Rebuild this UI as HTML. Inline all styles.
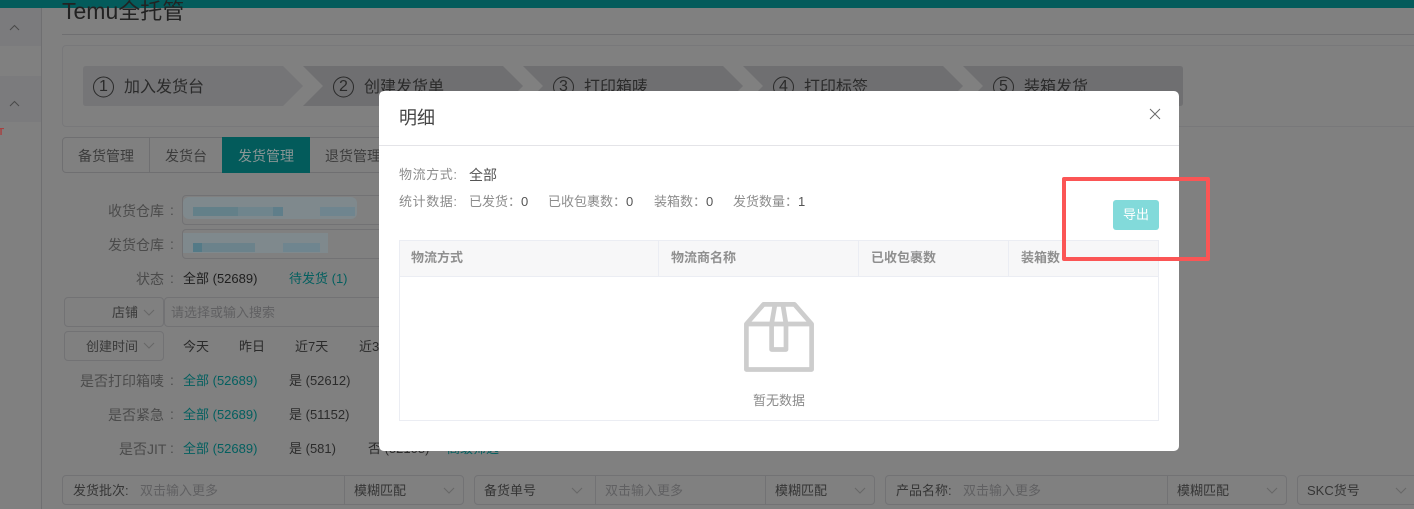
<!DOCTYPE html>
<html lang="zh">
<head>
<meta charset="utf-8">
<title>明细</title>
<style>
html,body{margin:0;padding:0}
body{width:1414px;height:509px;overflow:hidden;position:relative;background:#808080;font-family:"Liberation Sans","Noto Sans CJK SC",sans-serif;font-size:13px;color:#333}
.a{position:absolute;white-space:nowrap}
.t{position:absolute;white-space:nowrap;line-height:20px;height:20px}
.lb{color:#4b4b4b;font-size:14px}
.dk{color:#2b2b2b}
.gr{color:#035f5f}
.box{position:absolute;box-sizing:border-box;border:1px solid #727274;border-radius:4px}
svg{position:absolute;overflow:visible}
.m{color:#8c8c8c}
.d{color:#555}
.th{position:absolute;top:240px;height:36px;line-height:35px;font-weight:bold;color:#8f8f8f;font-size:13px;white-space:nowrap}
.step{font-size:16px}
.num{font-size:16px;width:20px;text-align:center}
.tb{font-size:14px;color:#3c3c3c}
.c{letter-spacing:.6px}
</style>
</head>
<body>
<div class="a" style="left:0;top:0;width:1414px;height:8px;background:#035b5b"></div>

<!-- sidebar -->
<div class="a" style="left:0;top:8px;width:41px;height:38px;background:#7b7b7d"></div>
<div class="a" style="left:0;top:76px;width:41px;height:46px;background:#7b7b7d"></div>
<div class="a" style="left:41px;top:8px;width:1px;height:501px;background:#6f6f71"></div>
<svg style="left:0;top:0" width="42" height="140"><path d="M10 30L14.500 25.500L19 30M10 106L14.500 101.500L19 106" fill="none" stroke="#4a4a4a" stroke-width="1"/></svg>
<div class="a" style="left:-2px;top:126px;font-size:10px;font-weight:bold;color:#a84040;line-height:14px">T</div>

<!-- heading -->
<div class="a" style="left:62px;top:-3px;font-size:22px;line-height:28px;color:#222"><span style="font-size:23px">Temu</span>全托管</div>
<div class="a" style="left:62px;top:34px;width:1352px;height:1px;background:#6f6f71"></div>

<!-- steps card -->
<div class="box" style="left:62px;top:45px;width:1400px;height:82px;border-color:#78787a"></div>
<svg style="left:0;top:0" width="1414" height="120">
<path fill="#757577" d="M86 66H283L303 86L283 106H86Q83 106 83 103V69Q83 66 86 66Z"/>
<g fill="#6f6f71">
<path d="M303 66H503L523 86L503 106H303L323 86Z"/>
<path d="M523 66H723L743 86L723 106H523L543 86Z"/>
<path d="M743 66H943L963 86L943 106H743L763 86Z"/>
<path d="M963 66H1180Q1183 66 1183 69V103Q1183 106 1180 106H963L983 86Z"/>
</g>
<g fill="none" stroke="#2a2a2a" stroke-width="1">
<circle cx="103.500" cy="87" r="10"/><circle cx="343.500" cy="87" r="10"/><circle cx="563.500" cy="87" r="10"/><circle cx="783.500" cy="87" r="10"/><circle cx="1003.500" cy="87" r="10"/>
</g>
</svg>
<div class="t dk num" style="left:93.500px;top:77px">1</div>
<div class="t dk num" style="left:333.500px;top:77px">2</div>
<div class="t dk num" style="left:553.500px;top:77px">3</div>
<div class="t dk num" style="left:773.500px;top:77px">4</div>
<div class="t dk num" style="left:993.500px;top:77px">5</div>
<div class="t dk step" style="left:124px;top:78px">加入发货台</div>
<div class="t dk step" style="left:364px;top:78px">创建发货单</div>
<div class="t dk step" style="left:584px;top:78px">打印箱唛</div>
<div class="t dk step" style="left:804px;top:78px">打印标签</div>
<div class="t dk step" style="left:1024px;top:78px">装箱发货</div>

<!-- tabs -->
<div class="box" style="left:62px;top:137px;width:340px;height:36px;border-color:#6f6f71"></div>
<div class="a" style="left:149px;top:137px;width:1px;height:36px;background:#6f6f71"></div>
<div class="a" style="left:222px;top:137px;width:88px;height:36px;background:#035b5b"></div>
<div class="t tb" style="left:78px;top:146px">备货管理</div>
<div class="t tb" style="left:165px;top:146px">发货台</div>
<div class="t tb" style="left:238px;top:146px;color:#8a9695">发货管理</div>
<div class="t tb" style="left:325px;top:146px">退货管理</div>

<!-- warehouse -->
<div class="t lb" style="left:108px;top:201px">收货仓库</div><div class="t lb" style="left:170px;top:200px">:</div>
<div class="box" style="left:182px;top:195px;width:300px;height:30px"></div>
<div class="a" style="left:183px;top:197px;width:174px;height:22px;background:#7f898d;border-radius:6px"></div>
<div class="a" style="left:193px;top:207px;width:45px;height:9px;background:#638089"></div>
<div class="a" style="left:238px;top:207px;width:35px;height:9px;background:#6f858d"></div>
<div class="a" style="left:273px;top:207px;width:10px;height:9px;background:#5f7e8a"></div>
<div class="a" style="left:320px;top:207px;width:35px;height:9px;background:#6f858f"></div>
<div class="t lb" style="left:108px;top:235px">发货仓库</div><div class="t lb" style="left:170px;top:234px">:</div>
<div class="box" style="left:182px;top:229px;width:300px;height:30px"></div>
<div class="a" style="left:183px;top:233px;width:145px;height:20px;background:#7f898d"></div>
<div class="a" style="left:193px;top:243px;width:9px;height:9px;background:#547a87"></div>
<div class="a" style="left:202px;top:243px;width:53px;height:9px;background:#6b828b"></div>
<div class="a" style="left:283px;top:243px;width:37px;height:9px;background:#6f858f"></div>

<!-- filters -->
<div class="t lb" style="left:136px;top:269px">状态</div><div class="t lb" style="left:170px;top:268px">:</div>
<div class="t" style="left:183px;top:269px;color:#1e1e1e">全部 (52689)</div>
<div class="t gr" style="left:289px;top:269px">待发货 (1)</div>

<div class="box" style="left:64px;top:297px;width:100px;height:30px"></div>
<div class="t" style="left:112px;top:303px;color:#3a3a3a">店铺</div>
<svg style="left:144px;top:309px" width="10" height="8"><path d="M0 1L5 6L10 1" fill="none" stroke="#666" stroke-width="1"/></svg>
<div class="box" style="left:164px;top:297px;width:300px;height:30px"></div>
<div class="t" style="left:171px;top:303px;color:#606062">请选择或输入搜索</div>

<div class="box" style="left:64px;top:331px;width:100px;height:30px"></div>
<div class="t" style="left:86px;top:337px;color:#3a3a3a">创建时间</div>
<svg style="left:144px;top:342px" width="10" height="8"><path d="M0 1L5 6L10 1" fill="none" stroke="#666" stroke-width="1"/></svg>
<div class="t" style="left:183px;top:337px;color:#2a2a2a">今天</div>
<div class="t" style="left:239px;top:337px;color:#2a2a2a">昨日</div>
<div class="t" style="left:295px;top:337px;color:#2a2a2a">近7天</div>
<div class="t" style="left:359px;top:337px;color:#2a2a2a">近30天</div>

<div class="t lb" style="left:80px;top:371px">是否打印箱唛</div><div class="t lb" style="left:170px;top:370px">:</div>
<div class="t gr" style="left:183px;top:371px">全部 (52689)</div>
<div class="t dk" style="left:289px;top:371px">是 (52612)</div>
<div class="t lb" style="left:108px;top:405px">是否紧急</div><div class="t lb" style="left:170px;top:404px">:</div>
<div class="t gr" style="left:183px;top:405px">全部 (52689)</div>
<div class="t dk" style="left:289px;top:405px">是 (51152)</div>
<div class="t lb" style="left:119px;top:439px">是否JIT</div><div class="t lb" style="left:170px;top:438px">:</div>
<div class="t gr" style="left:183px;top:439px">全部 (52689)</div>
<div class="t dk" style="left:289px;top:439px">是 (581)</div>
<div class="t dk" style="left:368px;top:439px">否 (52108)</div>
<div class="t gr" style="left:447px;top:439px">高级筛选</div>

<!-- bottom inputs -->
<div class="box" style="left:62px;top:475px;width:402px;height:30px"></div>
<div class="a" style="left:344px;top:475px;width:1px;height:30px;background:#727274"></div>
<div class="t" style="left:73px;top:481px;color:#353535">发货批次:</div>
<div class="t" style="left:140px;top:481px;color:#606062">双击输入更多</div>
<div class="t" style="left:354px;top:481px;color:#353535">模糊匹配</div>
<svg style="left:444px;top:487px" width="10" height="8"><path d="M0 1L5 6L10 1" fill="none" stroke="#666" stroke-width="1"/></svg>

<div class="box" style="left:474px;top:475px;width:401px;height:30px"></div>
<div class="a" style="left:595px;top:475px;width:1px;height:30px;background:#727274"></div>
<div class="a" style="left:765px;top:475px;width:1px;height:30px;background:#727274"></div>
<div class="t" style="left:484px;top:481px;color:#353535">备货单号</div>
<svg style="left:572px;top:487px" width="10" height="8"><path d="M0 1L5 6L10 1" fill="none" stroke="#666" stroke-width="1"/></svg>
<div class="t" style="left:605px;top:481px;color:#606062">双击输入更多</div>
<div class="t" style="left:775px;top:481px;color:#353535">模糊匹配</div>
<svg style="left:855px;top:487px" width="10" height="8"><path d="M0 1L5 6L10 1" fill="none" stroke="#666" stroke-width="1"/></svg>

<div class="box" style="left:885px;top:475px;width:402px;height:30px"></div>
<div class="a" style="left:1167px;top:475px;width:1px;height:30px;background:#727274"></div>
<div class="t" style="left:896px;top:481px;color:#353535">产品名称:</div>
<div class="t" style="left:963px;top:481px;color:#606062">双击输入更多</div>
<div class="t" style="left:1177px;top:481px;color:#353535">模糊匹配</div>
<svg style="left:1267px;top:487px" width="10" height="8"><path d="M0 1L5 6L10 1" fill="none" stroke="#666" stroke-width="1"/></svg>

<div class="box" style="left:1297px;top:475px;width:130px;height:30px"></div>
<div class="t" style="left:1307px;top:481px;color:#353535">SKC货号</div>
<svg style="left:1396px;top:487px" width="10" height="8"><path d="M0 1L5 6L10 1" fill="none" stroke="#666" stroke-width="1"/></svg>

<!-- modal -->
<div class="a" style="left:379px;top:91px;width:800px;height:360px;background:#fff;border-radius:5px"></div>
<div class="a" style="left:379px;top:145px;width:800px;height:1px;background:#e4e4e8"></div>
<div class="t" style="left:399px;top:107px;font-size:18px;line-height:22px;height:22px;color:#444">明细</div>
<svg style="left:1150px;top:109px" width="10" height="10"><path d="M0 0L10 10M10 0L0 10" fill="none" stroke="#6a6a6a" stroke-width="1"/></svg>

<div class="t m c" style="left:399px;top:165px">物流方式:</div>
<div class="t d" style="left:469px;top:165px;font-size:14px">全部</div>
<div class="t m c" style="left:399px;top:192px">统计数据:</div>
<div class="t m" style="left:469px;top:192px">已发货：<span class="d">0</span></div>
<div class="t m" style="left:548px;top:192px">已收包裹数：<span class="d">0</span></div>
<div class="t m" style="left:654px;top:192px">装箱数：<span class="d">0</span></div>
<div class="t m" style="left:733px;top:192px">发货数量：<span class="d">1</span></div>

<div class="a" style="left:1113px;top:200px;width:46px;height:30px;background:#82dada;border-radius:3px;color:#fff;font-size:13px;line-height:30px;text-align:center">导出</div>

<!-- table -->
<div class="box" style="left:399px;top:240px;width:760px;height:181px;border-color:#ebedf3;border-radius:0"></div>
<div class="a" style="left:400px;top:241px;width:758px;height:35px;background:#f7f7f8"></div>
<div class="a" style="left:400px;top:276px;width:758px;height:1px;background:#ebedf3"></div>
<div class="a" style="left:658px;top:241px;width:1px;height:35px;background:#ebedf3"></div>
<div class="a" style="left:858px;top:241px;width:1px;height:35px;background:#ebedf3"></div>
<div class="a" style="left:1008px;top:241px;width:1px;height:35px;background:#ebedf3"></div>
<div class="th" style="left:411px">物流方式</div>
<div class="th" style="left:671px">物流商名称</div>
<div class="th" style="left:871px">已收包裹数</div>
<div class="th" style="left:1021px">装箱数</div>

<svg style="left:744px;top:302px" width="70" height="70" viewBox="0 0 70 70">
<g fill="none" stroke="#cdcdcd" stroke-width="4.700" stroke-linejoin="round">
<path d="M2.400 22L19.500 2.400H50.500L67.600 22V67.500H2.400Z"/>
<path d="M2.400 22H67.600"/>
<path d="M31 2.400L27.600 22V47.500H42V22L38.800 2.400"/>
</g>
</svg>
<div class="t" style="left:753px;top:391px;color:#8a8a8a;font-size:13px">暂无数据</div>

<!-- red annotation -->
<div class="box" style="left:1062px;top:177px;width:148px;height:84px;border:4px solid #fb5555;border-radius:2px"></div>
</body>
</html>
